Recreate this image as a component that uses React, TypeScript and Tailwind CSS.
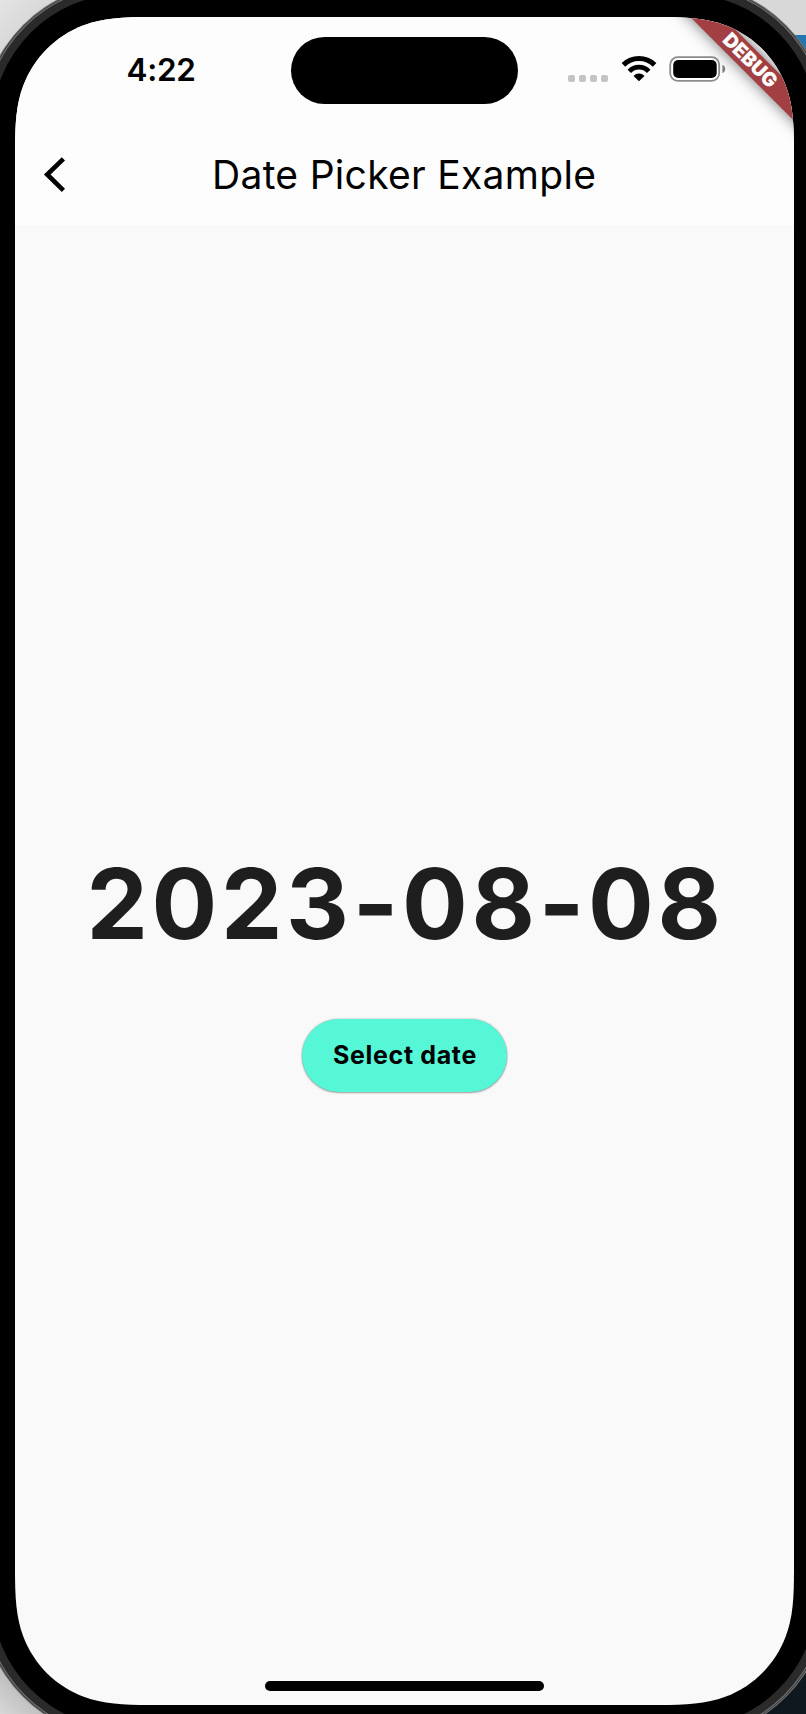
export default function App() {
  return (
    <div className="h-[1714px] w-[806px] overflow-hidden bg-[linear-gradient(to_right,transparent_403px,#2477ad_403px),linear-gradient(135deg,#e4e4e4_0px,#d4d4d4_50px,#d8d8d8_400px),linear-gradient(45deg,#d8d8d8_0px,#a8a8a8_60px,#a8a8a8_400px,#10181f_400px)] bg-[position:0_35px,0_0,0_100%] bg-[size:806px_80px,806px_857px,806px_857px] bg-no-repeat font-[Inter,sans-serif]">
      <div className="relative -ml-2 -mt-1.5 h-[1734px] w-[825px] rounded-[132px] bg-black p-[23px] shadow-[0_0_0_8px_#2a2a2a,0_0_0_9px_#777777,0_0_0_10px_#3c3c3c,0_0_0_11px_#777777]">
        <div className="relative flex h-[1688px] w-[779px] flex-col bg-[#f9f9f9] [clip-path:path('M135_0H644C671_0_691_1_710.2_8.2C738.4_18.8_760.2_40.6_770.8_68.8C778_88_779_108_779_135V1553C779_1580_778_1600_770.8_1619.2C760.2_1647.4_738.4_1669.2_710.2_1679.8C691_1687_671_1688_644_1688H135C108_1688_88_1687_68.8_1679.8C40.6_1669.2_18.8_1647.4_8.2_1619.2C1_1600_0_1580_0_1553V135C0_108_1_88_8.2_68.8C18.8_40.6_40.6_18.8_68.8_8.2C88_1_108_0_135_0Z')]">
          <header className="h-[208px] shrink-0 bg-[#fdfdfd]">
            <div className="flex h-[108px] items-start">
              <div className="w-[276px] pl-[111.5px] pt-[33px] text-[31.5px] font-semibold leading-[40px] tracking-[-0.3px]">4:22</div>
              <div className="mt-5 h-[67px] w-[227px] rounded-[34px] bg-black" />
              <div className="ml-[50px] mt-[58px] flex gap-1">
                <div className="size-[7px] rounded-[2px] bg-[#c4c4c4]" />
                <div className="size-[7px] rounded-[2px] bg-[#c4c4c4]" />
                <div className="size-[7px] rounded-[2px] bg-[#c4c4c4]" />
                <div className="size-[7px] rounded-[2px] bg-[#c4c4c4]" />
              </div>
              <svg className="ml-[13px] mt-[39px] h-[26px] w-[36px]" viewBox="0 0 36 26" fill="none" stroke="#000">
                <path d="M2.4 8.9C11 .5 25 .5 33.6 8.9" strokeWidth="5" />
                <path d="M8.3 15.4C13.5 9.8 22.5 9.8 27.7 15.4" strokeWidth="4.8" />
                <path d="M18 25.3L12.5 20C15.4 16.7 20.6 16.7 23.5 20Z" fill="#000" stroke="none" />
              </svg>
              <svg className="ml-[12px] mt-[39px] h-[26px] w-[58px]" viewBox="0 0 58 26">
                <rect x="1.2" y="1.2" width="49" height="23.6" rx="7.5" fill="none" stroke="#8c8c8c" strokeWidth="1.8" />
                <rect x="4.2" y="4" width="43.5" height="18" rx="5" />
                <path d="M53.4 9C57.2 10 57.2 16 53.4 17Z" fill="#808080" />
              </svg>
            </div>
            <div className="flex h-[100px] items-center">
              <svg className="ml-[28px] h-9 w-6" viewBox="0 0 24 36" fill="none" stroke="#000" strokeWidth="4.6">
                <path d="M20.4 1.8L4.2 17.5L20.4 33.3" />
              </svg>
              <h1 className="ml-[145px] whitespace-nowrap text-[39px] font-normal tracking-[0.3px]">Date Picker Example</h1>
            </div>
          </header>
          <main className="flex grow flex-col items-center pt-[619px]">
            <div className="whitespace-nowrap pl-[2px] text-[97.5px] font-bold leading-[120px] tracking-[3.7px] text-[#1e1e1e]">2023-08-08</div>
            <button className="mt-[55px] h-[73px] w-[205px] rounded-full bg-[#55f7d7] pl-px text-[25px] font-bold tracking-[0.65px] text-black shadow-[0_0_2px_rgba(0,0,0,0.3),0_1px_2px_rgba(0,0,0,0.3)]">Select date</button>
          </main>
          <div className="mb-[14px] h-[10px] w-[279px] shrink-0 self-center rounded-full bg-black" />
          <div className="absolute left-[635px] top-[32px] flex h-[23px] w-[200px] rotate-45 items-center justify-center bg-[#a23f42] text-[19.5px] font-black text-white shadow-[0_0_15px_rgba(0,0,0,0.55)]">DEBUG</div>
        </div>
      </div>
    </div>
  );
}
